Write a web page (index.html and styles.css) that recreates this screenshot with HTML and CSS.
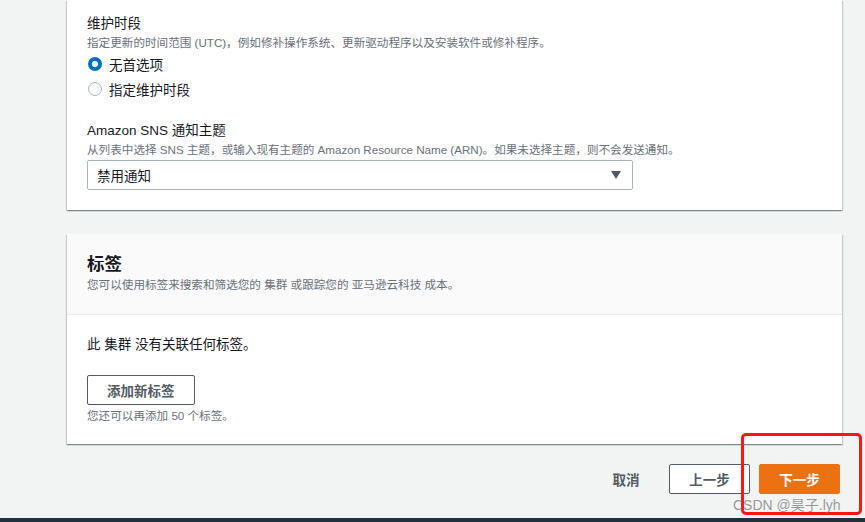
FILE: index.html
```html
<!DOCTYPE html>
<html lang="zh-CN">
<head>
  <meta charset="UTF-8">
  <meta name="viewport" content="width=device-width, initial-scale=1.0">
  <title>配置集群 - 维护与标签</title>
  <link rel="stylesheet" href="styles.css">
</head>
<body>
  <div class="page">
    <div class="card card-settings">
      <div class="field">
        <div class="field-label">维护时段</div>
        <div class="field-desc">指定更新的时间范围 (UTC)，例如修补操作系统、更新驱动程序以及安装软件或修补程序。</div>
        <div class="radio-group">
          <label class="radio-row"><span class="radio checked"></span>无首选项</label>
          <label class="radio-row"><span class="radio"></span>指定维护时段</label>
        </div>
      </div>

      <div class="field field-sns">
        <div class="field-label">Amazon SNS 通知主题</div>
        <div class="field-desc">从列表中选择 SNS 主题，或输入现有主题的 Amazon Resource Name (ARN)。如果未选择主题，则不会发送通知。</div>
        <div class="select">
          <span>禁用通知</span>
          <span class="caret"></span>
        </div>
      </div>
    </div>

    <div class="card card-tags">
      <div class="card-header">
        <h2>标签</h2>
        <div class="field-desc">您可以使用标签来搜索和筛选您的 集群 或跟踪您的 亚马逊云科技 成本。</div>
      </div>
      <div class="card-body">
        <p class="empty">此 集群 没有关联任何标签。</p>
        <button class="btn">添加新标签</button>
        <div class="field-desc hint">您还可以再添加 50 个标签。</div>
      </div>
    </div>

    <div class="actions">
      <button class="btn btn-link">取消</button>
      <button class="btn">上一步</button>
      <button class="btn btn-primary">下一步</button>
    </div>

    <div class="bottom-bar"></div>

    <div class="mark"></div>
    <div class="watermark">CSDN @昊子.lyh</div>
  </div>
</body>
</html>
```

FILE: styles.css
```css
* {
  box-sizing: border-box;
  margin: 0;
  padding: 0;
}

body {
  font-family: "Liberation Sans", "Noto Sans CJK SC", sans-serif;
  background: #f2f3f3;
  color: #16191f;
  font-size: 13.5px;
  overflow: hidden;
}

.page {
  position: relative;
  height: 522px;
  padding: 0 23px 0 67px;
  display: flex;
  flex-direction: column;
}

.card {
  background: #fff;
  box-shadow: 0 1px 1px 0 rgba(0, 28, 36, 0.3),
    1px 1px 1px 0 rgba(0, 28, 36, 0.15),
    -1px 1px 1px 0 rgba(0, 28, 36, 0.15);
}

.card-settings {
  padding: 13px 20px 20px;
}

.field-label {
  font-size: 13.5px;
  line-height: 22px;
}

.field-desc {
  font-size: 11.6px;
  line-height: 16px;
  color: #687078;
}

.radio-row {
  display: flex;
  align-items: center;
  height: 25px;
  font-size: 13.5px;
}

.radio {
  width: 14px;
  height: 14px;
  border-radius: 50%;
  border: 1px solid #aab7b8;
  margin: 0 7px 0 1px;
  background: #fff;
}

.radio.checked {
  border: 4px solid #0073bb;
}

.field-sns {
  margin-top: 19px;
}

.select {
  margin-top: 2px;
  width: 546px;
  height: 30px;
  border: 1px solid #aab7b8;
  border-radius: 2px;
  display: flex;
  align-items: center;
  justify-content: space-between;
  padding: 0 11px 0 9px;
  font-size: 13.5px;
}

.caret {
  width: 0;
  height: 0;
  border-left: 5px solid transparent;
  border-right: 5px solid transparent;
  border-top: 8px solid #545b64;
}

.card-tags {
  margin-top: 24px;
}

.card-header {
  background: #fafafa;
  padding: 18px 20px 21px;
  border-bottom: 1px solid #eaeded;
}

.card-header h2 {
  font-size: 17.5px;
  font-weight: bold;
  line-height: 24px;
  margin-bottom: 1px;
}

.card-body {
  padding: 19px 20px 20px;
}

.empty {
  line-height: 22px;
  margin-bottom: 19px;
}

.hint {
  margin-top: 3px;
}

.btn {
  font-family: inherit;
  font-size: 13.5px;
  font-weight: bold;
  height: 30px;
  padding: 0 19px;
  background: #fff;
  color: #545b64;
  border: 1px solid #545b64;
  border-radius: 2px;
  cursor: pointer;
}

.actions {
  margin-top: 20px;
  padding-right: 2px;
  display: flex;
  justify-content: flex-end;
  gap: 9px;
}

.actions .btn {
  width: 81px;
  padding: 0;
}

.actions .btn-link {
  width: 68px;
  border-color: transparent;
  background: transparent;
}

.btn-primary {
  background: #ec7211;
  border-color: #ec7211;
  color: #fff;
}

.bottom-bar {
  margin: 24px -23px 0 -67px;
  height: 4px;
  background: #232f3e;
}

/* screenshot annotation */
.mark {
  position: absolute;
  left: 741px;
  top: 433px;
  width: 121px;
  height: 82px;
  border: 3px solid #ff1414;
  border-radius: 5px;
}

.watermark {
  position: absolute;
  left: 733px;
  top: 496px;
  font-size: 14px;
  line-height: 18px;
  color: rgba(120, 120, 120, 0.75);
}
```
